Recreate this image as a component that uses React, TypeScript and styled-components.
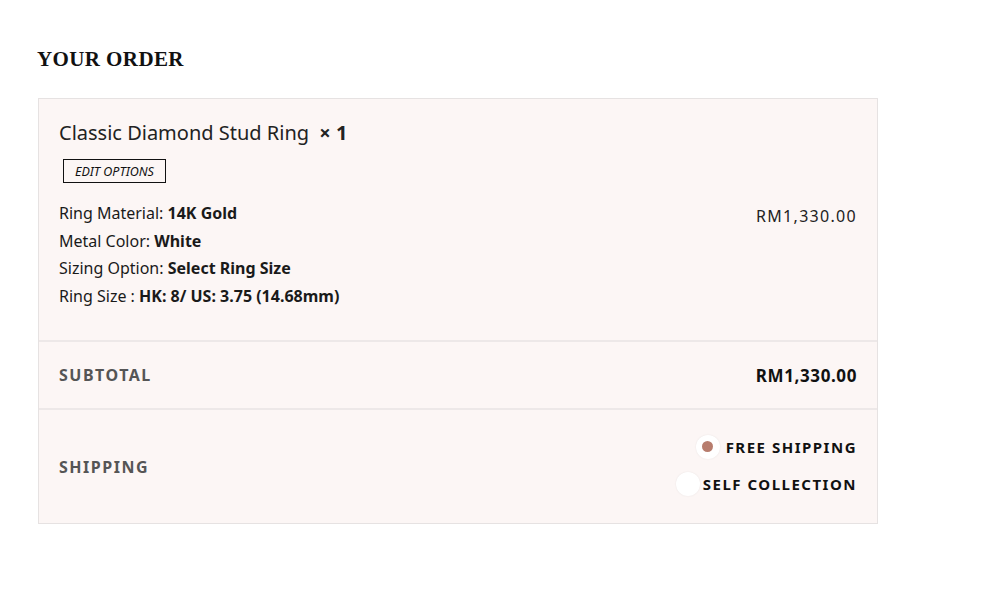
import styled, { createGlobalStyle } from 'styled-components'

const GlobalStyle = createGlobalStyle`
  body {
    margin: 0;
    background: #fff;
    font-family: 'Noto Sans', 'Open Sans', sans-serif;
    color: #1c1c1c;
  }
`

const Page = styled.div`
  width: 840px;
  padding: 44px 0 0 38px;
`

const Title = styled.h3`
  margin: 0 0 24px -1px;
  font-family: 'Liberation Serif', serif;
  font-weight: bold;
  font-size: 21px;
  letter-spacing: 0.4px;
  color: #111;
  line-height: 30px;
`

const Table = styled.div`
  background: #fcf6f5;
  border: 1px solid #e6e2e2;
`

const Row = styled.div<{ $height: number }>`
  display: flex;
  justify-content: space-between;
  align-items: center;
  height: ${p => p.$height}px;
  padding: 0 20px;
  border-top: 2px solid #ede8e8;
`

const ItemRow = styled.div`
  display: flex;
  justify-content: space-between;
  height: 241px;
  padding: 19px 20px 0 20px;
  box-sizing: border-box;
`

const ItemInfo = styled.div`
  display: flex;
  flex-direction: column;
`

const ItemName = styled.div`
  font-size: 20px;
  line-height: 30px;
  color: #222;
`

const Qty = styled.span`
  font-weight: bold;
  margin-left: 5px;
`

const EditButton = styled.button`
  align-self: flex-start;
  margin: 11px 0 0 4px;
  padding: 0 11px;
  height: 24px;
  border: 1.5px solid #111;
  background: transparent;
  font-family: 'Noto Sans', sans-serif;
  font-style: italic;
  font-size: 12.5px;
  color: #111;
`

const Details = styled.div`
  margin-top: 17px;
  font-size: 16px;
  line-height: 27.7px;
  color: #1a1a1a;
`

const Strong = styled.b`
  font-weight: bold;
`

const Price = styled.div`
  margin-top: 87px;
  font-size: 16px;
  letter-spacing: 1.3px;
  color: #222;
`

const Label = styled.div`
  font-size: 16px;
  font-weight: bold;
  letter-spacing: 1.5px;
  color: #555;
`

const Total = styled.div`
  font-size: 17px;
  font-weight: bold;
  letter-spacing: 0.6px;
  color: #111;
`

const Options = styled.div`
  display: flex;
  flex-direction: column;
  align-items: flex-end;
  gap: 13px;
  margin-top: -3px;
`

const Option = styled.label`
  display: flex;
  align-items: center;
  font-size: 15px;
  font-weight: bold;
  letter-spacing: 1.5px;
  color: #111;
`

const Radio = styled.span<{ $checked?: boolean }>`
  width: 24px;
  height: 24px;
  border-radius: 50%;
  background: #fff;
  box-shadow: 0 0 2px rgba(0, 0, 0, 0.08);
  display: flex;
  align-items: center;
  justify-content: center;
  margin-right: ${p => (p.$checked ? '6px' : '3px')};
  &::after {
    content: '';
    display: ${p => (p.$checked ? 'block' : 'none')};
    width: 11px;
    height: 11px;
    border-radius: 50%;
    background: #b77c6d;
  }
`

export default function App() {
  return (
    <>
      <GlobalStyle />
      <Page>
        <Title>YOUR ORDER</Title>
        <Table>
          <ItemRow>
            <ItemInfo>
              <ItemName>
                Classic Diamond Stud Ring <Qty>× 1</Qty>
              </ItemName>
              <EditButton>EDIT OPTIONS</EditButton>
              <Details>
                <div>Ring Material: <Strong>14K Gold</Strong></div>
                <div>Metal Color: <Strong>White</Strong></div>
                <div>Sizing Option: <Strong>Select Ring Size</Strong></div>
                <div>Ring Size : <Strong>HK: 8/ US: 3.75 (14.68mm)</Strong></div>
              </Details>
            </ItemInfo>
            <Price>RM1,330.00</Price>
          </ItemRow>
          <Row $height={66}>
            <Label>SUBTOTAL</Label>
            <Total>RM1,330.00</Total>
          </Row>
          <Row $height={113}>
            <Label>SHIPPING</Label>
            <Options>
              <Option>
                <Radio $checked />
                FREE SHIPPING
              </Option>
              <Option>
                <Radio />
                SELF COLLECTION
              </Option>
            </Options>
          </Row>
        </Table>
      </Page>
    </>
  )
}
